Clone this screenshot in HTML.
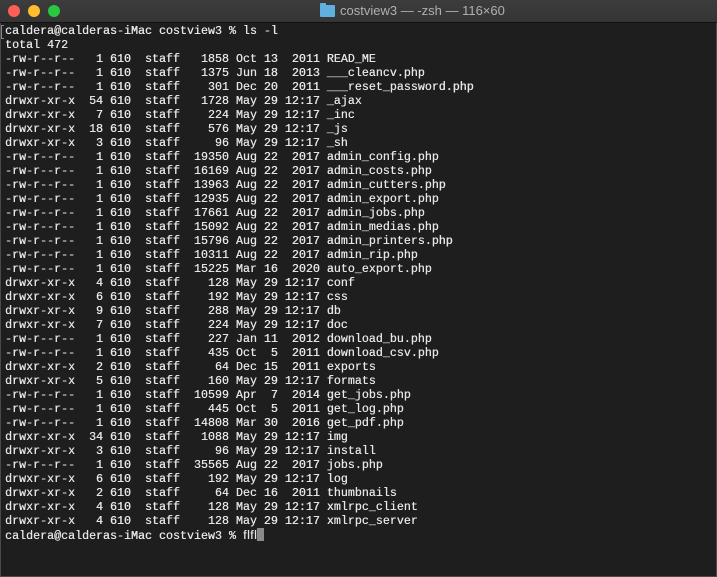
<!DOCTYPE html>
<html><head><meta charset="utf-8"><style>
html,body{margin:0;padding:0;width:717px;height:577px;overflow:hidden;background:#1e1e1e;}
.win{position:absolute;left:0;top:0;width:715px;height:576px;border:1px solid #4a4a4a;border-top:none;background:#1e1e1e;}
.tb{position:absolute;left:0;top:0;width:717px;height:22px;background:linear-gradient(#3c3c3c,#353535);border-bottom:1px solid #111;}
.dot{position:absolute;top:5px;width:12px;height:12px;border-radius:50%;}
.title{position:absolute;left:340px;top:3px;font:13px "Liberation Sans",sans-serif;color:#b0b0b0;white-space:nowrap;}
.folder{position:absolute;left:320px;top:5px;width:15px;height:12px;background:#5fb0e0;border-radius:1px;}
.folder:before{content:"";position:absolute;left:0;top:-2px;width:6px;height:3px;background:#5fb0e0;border-radius:1px 1px 0 0;}
pre{position:absolute;left:5px;top:24px;margin:0;font:11.67px/14px "Liberation Mono",monospace;color:#e6e6e6;letter-spacing:0;text-shadow:0.3px 0 0 #e6e6e6;}
.cur{display:inline-block;width:7px;height:13px;background:#8a8a8a;vertical-align:-2px;}
.mark{position:absolute;left:1px;top:25px;width:2px;height:12px;border:1px solid #888;border-right:none;}
</style></head><body>
<div class="win"></div>
<div class="tb">
<div class="dot" style="left:8px;background:#fd5f57"></div>
<div class="dot" style="left:28px;background:#febc2e"></div>
<div class="dot" style="left:48px;background:#28c840"></div>
<div class="folder"></div>
<div class="title">costview3 — -zsh — 116×60</div>
</div>
<div class="mark"></div>
<pre>caldera@calderas-iMac costview3 % ls -l
total 472
-rw-r--r--   1 610  staff   1858 Oct 13  2011 READ_ME
-rw-r--r--   1 610  staff   1375 Jun 18  2013 ___cleancv.php
-rw-r--r--   1 610  staff    301 Dec 20  2011 ___reset_password.php
drwxr-xr-x  54 610  staff   1728 May 29 12:17 _ajax
drwxr-xr-x   7 610  staff    224 May 29 12:17 _inc
drwxr-xr-x  18 610  staff    576 May 29 12:17 _js
drwxr-xr-x   3 610  staff     96 May 29 12:17 _sh
-rw-r--r--   1 610  staff  19350 Aug 22  2017 admin_config.php
-rw-r--r--   1 610  staff  16169 Aug 22  2017 admin_costs.php
-rw-r--r--   1 610  staff  13963 Aug 22  2017 admin_cutters.php
-rw-r--r--   1 610  staff  12935 Aug 22  2017 admin_export.php
-rw-r--r--   1 610  staff  17661 Aug 22  2017 admin_jobs.php
-rw-r--r--   1 610  staff  15092 Aug 22  2017 admin_medias.php
-rw-r--r--   1 610  staff  15796 Aug 22  2017 admin_printers.php
-rw-r--r--   1 610  staff  10311 Aug 22  2017 admin_rip.php
-rw-r--r--   1 610  staff  15225 Mar 16  2020 auto_export.php
drwxr-xr-x   4 610  staff    128 May 29 12:17 conf
drwxr-xr-x   6 610  staff    192 May 29 12:17 css
drwxr-xr-x   9 610  staff    288 May 29 12:17 db
drwxr-xr-x   7 610  staff    224 May 29 12:17 doc
-rw-r--r--   1 610  staff    227 Jan 11  2012 download_bu.php
-rw-r--r--   1 610  staff    435 Oct  5  2011 download_csv.php
drwxr-xr-x   2 610  staff     64 Dec 15  2011 exports
drwxr-xr-x   5 610  staff    160 May 29 12:17 formats
-rw-r--r--   1 610  staff  10599 Apr  7  2014 get_jobs.php
-rw-r--r--   1 610  staff    445 Oct  5  2011 get_log.php
-rw-r--r--   1 610  staff  14808 Mar 30  2016 get_pdf.php
drwxr-xr-x  34 610  staff   1088 May 29 12:17 img
drwxr-xr-x   3 610  staff     96 May 29 12:17 install
-rw-r--r--   1 610  staff  35565 Aug 22  2017 jobs.php
drwxr-xr-x   6 610  staff    192 May 29 12:17 log
drwxr-xr-x   2 610  staff     64 Dec 16  2011 thumbnails
drwxr-xr-x   4 610  staff    128 May 29 12:17 xmlrpc_client
drwxr-xr-x   4 610  staff    128 May 29 12:17 xmlrpc_server
caldera@calderas-iMac costview3 % ﬂﬂ<span class="cur"></span></pre>
</body></html>
